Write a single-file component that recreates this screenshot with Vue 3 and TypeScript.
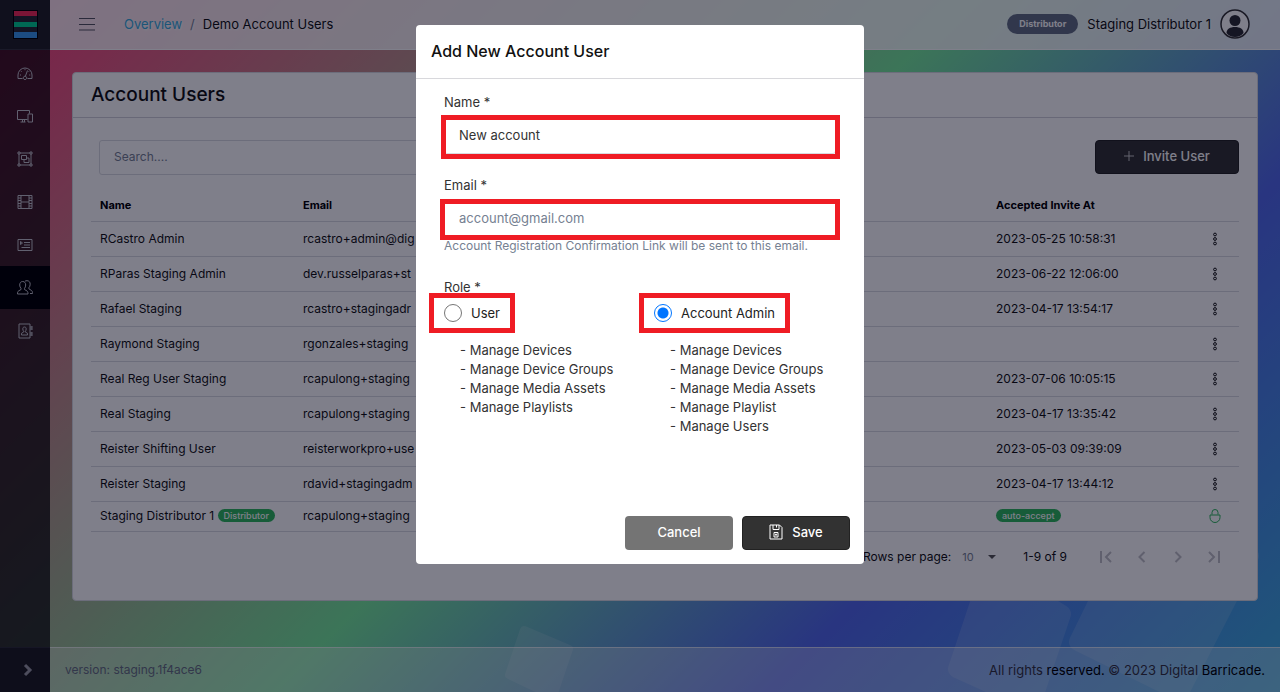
<script setup lang="ts">
import { ref } from 'vue'

interface UserRow {
  name: string
  email: string
  accepted: string
  tag?: string
  auto?: boolean
}

const rows: UserRow[] = [
  { name: 'RCastro Admin', email: 'rcastro+admin@dig', accepted: '2023-05-25 10:58:31' },
  { name: 'RParas Staging Admin', email: 'dev.russelparas+st', accepted: '2023-06-22 12:06:00' },
  { name: 'Rafael Staging', email: 'rcastro+stagingadr', accepted: '2023-04-17 13:54:17' },
  { name: 'Raymond Staging', email: 'rgonzales+staging', accepted: '' },
  { name: 'Real Reg User Staging', email: 'rcapulong+staging', accepted: '2023-07-06 10:05:15' },
  { name: 'Real Staging', email: 'rcapulong+staging', accepted: '2023-04-17 13:35:42' },
  { name: 'Reister Shifting User', email: 'reisterworkpro+use', accepted: '2023-05-03 09:39:09' },
  { name: 'Reister Staging', email: 'rdavid+stagingadm', accepted: '2023-04-17 13:44:12' },
  { name: 'Staging Distributor 1', email: 'rcapulong+staging', accepted: '', tag: 'Distributor', auto: true },
]

interface NavItem {
  label: string
  paths: string[]
  active?: boolean
}

const nav: NavItem[] = [
  {
    label: 'Dashboard',
    paths: [
      'M1 13.5V10a7 7 0 0 1 14 0v3.5h-4.5M1 13.5h4.5',
      'M8 11.2a1.7 1.7 0 1 0 .01 0M8.4 11.2L10.5 5.5M3 10h1M12.2 10h1M4.2 6.3l.7.7M8 4.2v1M12 6.3l-.7.7',
    ],
  },
  {
    label: 'Devices',
    paths: ['M10.5 11.5H.5v-9h12v3', 'M11 6h4.5v8H11zM3.5 14h5M5.5 11.5V14M7.5 11.5V14'],
  },
  {
    label: 'Device Groups',
    paths: [
      'M1 1h2v2H1zM13 1h2v2h-2zM1 13h2v2H1zM13 13h2v2h-2zM3 2h10M3 14h10M2 3v10M14 3v10',
      'M4.5 4.5h5v4h-5zM9.5 7h2.5v4.5H7v-3',
    ],
  },
  {
    label: 'Media Assets',
    paths: ['M1 1.500h14v13H1zM4 1.500v13M12 1.500v13M4 8h8', 'M1 4h3M1 6.500h3M1 9.500h3M1 12h3M12 4h3M12 6.500h3M12 9.500h3M12 12h3'],
  },
  {
    label: 'Playlists',
    paths: ['M1 2.500h14v11H1z', 'M3.500 4.500v3l2-1.500zM7 5.500h6M7 8h6M4.500 10.500H13'],
  },
  {
    label: 'Users',
    active: true,
    paths: [
      'M5.700 1.500c2 0 3 1.500 3 3.500 0 1.500-.5 2.500-1.200 3.400v1.100l2.500 1.500c.8.5 1 1.200 1 3H.5c0-1.800.2-2.500 1-3L4 9.500V8.400C3.200 7.500 2.700 6.500 2.700 5c0-2 1-3.500 3-3.500z',
      'M8 1.200C8.600.8 9.300.7 10 .7c2 0 3.200 1.500 3.200 3.500 0 1.600-.6 2.700-1.300 3.500v1.100l2.600 1.700c.8.5 1 1.500 1 3H13',
    ],
  },
  {
    label: 'Contacts',
    paths: [
      'M2 1h11v14H2zM13 4h2M13 6h2M13 10h2M13 12h2M15 3v4M15 9v4',
      'M7.500 4c1.200 0 1.700.8 1.700 2s-.5 1.800-.9 2.200v.8l2.200 1.300V12h-6v-1.700L6.700 9v-.8C6.300 7.800 5.800 7.200 5.800 6s.5-2 1.700-2z',
    ],
  },
]

const roles = [
  {
    id: 'user',
    label: 'User',
    grants: ['Manage Devices', 'Manage Device Groups', 'Manage Media Assets', 'Manage Playlists'],
  },
  {
    id: 'admin',
    label: 'Account Admin',
    grants: ['Manage Devices', 'Manage Device Groups', 'Manage Media Assets', 'Manage Playlist', 'Manage Users'],
  },
]

const name = ref('New account')
const email = ref('')
const role = ref('admin')
const search = ref('')
const perPage = ref('10')
</script>

<template>
  <div class="app">
    <svg class="shapes" viewBox="0 0 1280 692" preserveAspectRatio="xMaxYMax slice" aria-hidden="true">
      <path d="M524 630L569 649L553 696L509 675Z" />
      <path class="large" d="M990 570L1062 614L1032 703L957 669Z" />
      <path class="large" d="M1120 556L1250 556L1180 692L1078 642Z" />
    </svg>

    <aside class="sidebar">
      <a class="brand" href="#" aria-label="Home">
        <svg width="26" height="30" viewBox="0 0 26 30">
          <rect x="1" width="25" height="29" fill="#000" />
          <rect x="2" y="1" width="23" height="5" fill="#f52b57" />
          <rect x="2" y="6" width="23" height="6" fill="#262833" />
          <rect x="2" y="12" width="23" height="5" fill="#00d093" />
          <rect x="2" y="17" width="23" height="6" fill="#262833" />
          <rect x="2" y="22" width="23" height="6" fill="#3898ef" />
        </svg>
      </a>
      <nav class="nav">
        <a v-for="item in nav" :key="item.label" href="#" :class="{ active: item.active }" :aria-label="item.label">
          <svg width="16" height="16" viewBox="0 0 16 16">
            <path v-for="d in item.paths" :key="d" :d="d" />
          </svg>
        </a>
      </nav>
      <button class="minimizer" type="button" aria-label="Expand sidebar">
        <svg width="10" height="14" viewBox="0 0 10 14"><path d="M2 2l5 5-5 5" /></svg>
      </button>
    </aside>

    <div class="page">
      <header class="topbar">
        <button class="menu" type="button" aria-label="Toggle menu">
          <svg width="16" height="14" viewBox="0 0 16 14"><path d="M0 1.500h16M0 7.500h16M0 13h16" /></svg>
        </button>
        <nav class="crumbs">
          <a href="#">Overview</a><span class="slash">/</span><span>Demo Account Users</span>
        </nav>
        <span class="role-badge">Distributor</span>
        <span class="who">Staging Distributor 1</span>
        <button class="avatar" type="button" aria-label="Account">
          <svg width="30" height="30" viewBox="0 0 30 30">
            <circle cx="15" cy="15" r="14" fill="#fff" stroke="#333" stroke-width="1.500" />
            <circle cx="15" cy="11.500" r="5.500" fill="#2b2d33" stroke="none" />
            <path d="M6.500 24c0-4 3.500-6 8.500-6s8.500 2 8.500 6c-2 2.500-5 4-8.500 4s-6.500-1.500-8.500-4z" fill="#2b2d33" stroke="none" />
          </svg>
        </button>
      </header>

      <main class="main">
        <section class="card">
          <h1>Account Users</h1>
          <div class="card-body">
            <div class="tools">
              <input v-model="search" class="search" type="search" placeholder="Search...." aria-label="Search" />
              <button class="btn dark" type="button">
                <svg width="10" height="10" viewBox="0 0 10 10"><path d="M5 0v10M0 5h10" /></svg>
                <span>Invite User</span>
              </button>
            </div>
            <table>
              <thead>
                <tr>
                  <th class="c-name">Name</th>
                  <th>Email</th>
                  <th class="c-date">Accepted Invite At</th>
                  <th class="c-act" aria-label="Actions"></th>
                </tr>
              </thead>
              <tbody>
                <tr v-for="row in rows" :key="row.name" :class="{ short: row.auto }">
                  <td>{{ row.name }} <span v-if="row.tag" class="tag">{{ row.tag }}</span></td>
                  <td>{{ row.email }}</td>
                  <td><span v-if="row.auto" class="tag">auto-accept</span><template v-else>{{ row.accepted }}</template></td>
                  <td class="act">
                    <svg v-if="row.auto" class="lock" width="12" height="14" viewBox="0 0 12 14" aria-label="Locked">
                      <path d="M3 5.500V3.500a3 3 0 0 1 6 0v2M1 6h10v2.500a5 5 0 0 1-10 0z" />
                    </svg>
                    <button v-else type="button" aria-label="Row actions">
                      <svg width="6" height="14" viewBox="0 0 6 14">
                        <circle cx="3" cy="2.500" r="1.400" /><circle cx="3" cy="7" r="1.400" /><circle cx="3" cy="11.500" r="1.400" />
                      </svg>
                    </button>
                  </td>
                </tr>
              </tbody>
            </table>
            <div class="pager">
              <label for="per-page">Rows per page:</label>
              <span class="select">
                <select id="per-page" v-model="perPage"><option>10</option><option>25</option></select>
                <svg width="8" height="4" viewBox="0 0 8 4"><path d="M0 0h8L4 4z" /></svg>
              </span>
              <span class="range">1-9 of 9</span>
              <button type="button" disabled aria-label="First page"><svg width="12" height="12" viewBox="0 0 12 12"><path d="M1 0v12M11 1L6 6l5 5" /></svg></button>
              <button type="button" disabled aria-label="Previous page"><svg width="12" height="12" viewBox="0 0 12 12"><path d="M8.500 1l-5 5 5 5" /></svg></button>
              <button type="button" disabled aria-label="Next page"><svg width="12" height="12" viewBox="0 0 12 12"><path d="M3.500 1l5 5-5 5" /></svg></button>
              <button type="button" disabled aria-label="Last page"><svg width="12" height="12" viewBox="0 0 12 12"><path d="M11 0v12M1 1l5 5-5 5" /></svg></button>
            </div>
          </div>
        </section>
      </main>

      <footer class="footer">
        <span class="version">version: staging.1f4ace6</span>
        <span class="rights">All rights <b>reserved.</b> © 2023 Digital <b>Barricade.</b></span>
      </footer>
    </div>

    <div class="backdrop">
      <form class="modal" role="dialog" aria-labelledby="modal-title" @submit.prevent>
        <h2 id="modal-title">Add New Account User</h2>
        <div class="modal-body">
          <label class="field-label" for="f-name">Name *</label>
          <div class="field frame"><input id="f-name" v-model="name" type="text" /></div>
          <label class="field-label next" for="f-email">Email *</label>
          <div class="field frame email"><input id="f-email" v-model="email" type="email" placeholder="account@gmail.com" /></div>
          <p class="hint">Account Registration Confirmation Link will be sent to this email.</p>
          <div class="field-label role">Role *</div>
          <div class="roles">
            <div v-for="r in roles" :key="r.id">
              <label class="radio frame"><input v-model="role" type="radio" name="role" :value="r.id" /><span>{{ r.label }}</span></label>
              <ul><li v-for="g in r.grants" :key="g">- {{ g }}</li></ul>
            </div>
          </div>
        </div>
        <div class="actions">
          <button class="btn grey" type="button">Cancel</button>
          <button class="btn dark" type="submit">
            <svg width="14" height="16" viewBox="0 0 14 16">
              <path d="M1 1h9.500L13 3.500V15H1zM4 1v4.500h6V1M7.500 1v2.500M5 8.500h4v4.500H5zM6.500 10.200h1v1h-1z" />
            </svg>
            <span>Save</span>
          </button>
        </div>
      </form>
    </div>
  </div>
</template>

<style>
body {
  margin: 0;
}
</style>

<style scoped>
* {
  box-sizing: border-box;
}
.app {
  position: relative;
  display: flex;
  min-height: 100vh;
  overflow: hidden;
  background: linear-gradient(135deg, #ff3d7c 0%, #78ea9b 49%, #526aeb 74%, #3eb0df 100%);
  color: #111;
  font: 400 12px/20px Inter, "Noto Sans", sans-serif;
}
button,
input,
select {
  font: inherit;
  color: inherit;
}
button {
  padding: 0;
  border: 0;
  background: none;
  cursor: pointer;
}
a {
  text-decoration: none;
}
svg {
  display: block;
  fill: none;
  stroke: currentColor;
}
.shapes {
  position: absolute;
  inset: 0;
  width: 100%;
  height: 100%;
  fill: #fff;
  stroke: #fff;
  stroke-width: 8;
  stroke-linejoin: round;
  opacity: 0.12;
}
.shapes .large {
  stroke-width: 18;
}

.sidebar {
  position: relative;
  display: flex;
  flex-direction: column;
  flex: 0 0 50px;
  background: rgba(0, 0, 0, 0.72);
  color: #ccc;
}
.brand {
  display: flex;
  align-items: center;
  justify-content: center;
  height: 50px;
  border-bottom: 1px solid #34343c;
  background: #202124;
}
.brand svg {
  stroke: none;
}
.nav {
  flex: 1;
  padding-top: 1px;
}
.nav a {
  display: flex;
  align-items: center;
  justify-content: center;
  height: 43px;
  color: #c2c2ca;
}
.nav .active {
  background: #000;
}
.minimizer {
  display: flex;
  align-items: center;
  justify-content: center;
  height: 45px;
  padding-left: 5px;
  border-top: 1px solid #2c2c34;
  background: #1c1c20;
  color: #9a9aa4;
}
.minimizer svg {
  stroke-width: 3;
}

.page {
  position: relative;
  display: flex;
  flex: 1;
  flex-direction: column;
  min-width: 0;
}
.topbar {
  display: flex;
  align-items: center;
  height: 50px;
  padding: 0 30px 2px 29px;
  border-bottom: 1px solid #fff;
  background: rgba(255, 255, 255, 0.85);
  font-size: 13px;
  text-shadow: 1px 1px 2px #fff;
}
.menu {
  color: #555560;
}
.crumbs {
  display: flex;
  flex: 1;
  margin-left: 29px;
}
.crumbs a {
  color: #39aadb;
}
.slash {
  margin: 0 8px;
  color: #768192;
}
.role-badge {
  padding: 0 12px;
  border-radius: 10px;
  background: #636f83;
  color: #fff;
  font-size: 9px;
  font-weight: 700;
  text-shadow: none;
}
.who {
  margin: 0 9px;
}

.main {
  flex: 1;
  padding: 22px 22px 46px;
}
.card {
  min-height: 529px;
  border: 1px solid #d8dbe0;
  border-radius: 4px;
  background: #fff;
}
h1 {
  margin: 0;
  padding: 0 18px;
  border-bottom: 1px solid #d0d0d8;
  font-size: 19px;
  font-weight: 500;
  line-height: 44px;
}
.card-body {
  padding: 22px 18px 0;
}
.tools {
  display: flex;
  justify-content: space-between;
  padding-left: 8px;
}
.search {
  width: 400px;
  max-width: 50%;
  height: 35px;
  padding: 0 14px 2px;
  border: 1px solid #d8dbe0;
  border-radius: 3px;
  background: transparent;
}
.search::placeholder {
  color: #768192;
  opacity: 1;
}
.btn {
  display: flex;
  align-items: center;
  justify-content: center;
  gap: 9px;
  width: 108px;
  height: 34px;
  padding-bottom: 2px;
  border-radius: 4px;
  color: #fff;
  font-size: 13px;
  font-weight: 500;
}
.btn.dark {
  border: 1px solid #222;
  background: #323232;
}
.btn.grey {
  background: #747474;
}
.tools .btn {
  width: 144px;
}
.tools .btn svg {
  color: #c8c8c8;
}
table {
  width: 100%;
  margin-top: 15px;
  border-collapse: collapse;
  table-layout: fixed;
}
th,
td {
  overflow: hidden;
  height: 35px;
  padding: 0 9px;
  border-bottom: 1px solid #d8dbe0;
  text-align: left;
  white-space: nowrap;
}
th {
  height: 31px;
  color: #000;
  font-size: 11px;
  font-weight: 700;
}
.short td {
  height: 30px;
}
.c-name {
  width: 203px;
}
.c-date {
  width: 203px;
}
.c-act {
  width: 49px;
}
.tag {
  display: inline-block;
  padding: 0 6px;
  border-radius: 7px;
  background: #2eb85c;
  color: #fff;
  font-size: 9px;
  font-weight: 500;
  line-height: 13px;
  vertical-align: 1px;
}
td.act {
  padding: 0 18px 0 0;
}
.act svg {
  margin-left: auto;
}
.act button {
  display: block;
  margin-left: auto;
  margin-right: 3px;
}
.lock {
  color: #2eb85c;
}
.pager {
  display: flex;
  align-items: center;
  justify-content: flex-end;
  height: 50px;
  padding-right: 7px;
}
.select {
  display: flex;
  align-items: center;
  margin: 0 27px 0 11px;
  color: #768192;
}
.select select {
  width: 26px;
  padding: 0;
  border: 0;
  background: none;
  font-size: 11px;
  appearance: none;
}
.select svg {
  fill: #555;
  stroke: none;
}
.range {
  margin-right: 21px;
}
.pager button {
  display: flex;
  justify-content: center;
  width: 36px;
  color: #c0c0c6;
}
.pager button svg {
  stroke-width: 2;
}

.footer {
  display: flex;
  align-items: center;
  justify-content: space-between;
  height: 45px;
  padding: 0 15px;
  border-top: 1px solid rgba(255, 255, 255, 0.6);
  background: rgba(255, 255, 255, 0.3);
  color: #33333f;
}
.footer b {
  color: #000;
  font-weight: 400;
}
.version {
  color: #666e80;
}
.rights {
  font-size: 13px;
}

.backdrop {
  position: fixed;
  inset: 0;
  padding-top: 25px;
  background: rgba(0, 0, 21, 0.5);
}
.modal {
  width: 448px;
  max-width: 100%;
  margin: 0 auto;
  border-radius: 4px;
  background: #fff;
  color: #333;
  font-size: 13px;
}
h2 {
  margin: 0;
  padding: 0 15px;
  border-bottom: 1px solid #d8d8dc;
  color: #111;
  font-size: 16px;
  font-weight: 500;
  line-height: 53px;
}
.modal-body {
  padding: 13px 28px 0;
}
.field-label {
  display: block;
  margin-bottom: 6px;
}
.field-label.next {
  margin-top: 21px;
}
.field-label.role {
  margin-top: 23px;
}
.frame {
  position: relative;
}
.frame::after {
  position: absolute;
  inset: -3px -4px -5px -3px;
  border: 5px solid #ef1c24;
  content: "";
  pointer-events: none;
}
.frame.email::after {
  inset: -2px -4px -3px -4px;
}
.field input {
  display: block;
  width: 100%;
  height: 36px;
  padding: 0 14px 2px;
  border: 1px solid #d8dbe0;
  border-radius: 3px;
  outline: 0;
  background: #fff;
  color: #333;
}
.field input::placeholder {
  color: #768192;
  opacity: 1;
}
.hint {
  margin: 1px 0 0;
  color: #768192;
  font-size: 12px;
  line-height: 16px;
}
.roles {
  display: grid;
  grid-template-columns: 210px 1fr;
  min-height: 133px;
}
.radio {
  display: flex;
  align-items: center;
  gap: 9px;
  width: fit-content;
  height: 20px;
  color: #222;
}
.radio.frame::after {
  inset: -10px -15px;
}
.radio input {
  width: 18px;
  height: 18px;
  margin: 0;
  border: 1px solid #767676;
  border-radius: 50%;
  appearance: none;
}
.radio input:checked {
  border-color: #0075ff;
  background: radial-gradient(circle, #0075ff 5px, #fff 6px);
}
ul {
  margin: 18px 0 0;
  padding: 0 0 0 16px;
  list-style: none;
}
li {
  line-height: 19px;
}
.actions {
  display: flex;
  justify-content: flex-end;
  gap: 9px;
  padding: 80px 14px 14px;
}
</style>
